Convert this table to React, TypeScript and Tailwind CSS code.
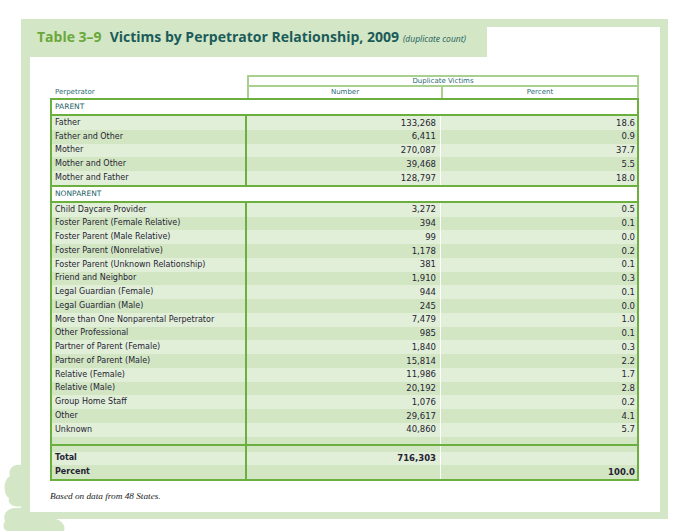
import React from 'react';

type Row = [string, string, string];

const parentRows: Row[] = [
  ['Father', '133,268', '18.6'],
  ['Father and Other', '6,411', '0.9'],
  ['Mother', '270,087', '37.7'],
  ['Mother and Other', '39,468', '5.5'],
  ['Mother and Father', '128,797', '18.0'],
];

const nonparentRows: Row[] = [
  ['Child Daycare Provider', '3,272', '0.5'],
  ['Foster Parent (Female Relative)', '394', '0.1'],
  ['Foster Parent (Male Relative)', '99', '0.0'],
  ['Foster Parent (Nonrelative)', '1,178', '0.2'],
  ['Foster Parent (Unknown Relationship)', '381', '0.1'],
  ['Friend and Neighbor', '1,910', '0.3'],
  ['Legal Guardian (Female)', '944', '0.1'],
  ['Legal Guardian (Male)', '245', '0.0'],
  ['More than One Nonparental Perpetrator', '7,479', '1.0'],
  ['Other Professional', '985', '0.1'],
  ['Partner of Parent (Female)', '1,840', '0.3'],
  ['Partner of Parent (Male)', '15,814', '2.2'],
  ['Relative (Female)', '11,986', '1.7'],
  ['Relative (Male)', '20,192', '2.8'],
  ['Group Home Staff', '1,076', '0.2'],
  ['Other', '29,617', '4.1'],
  ['Unknown', '40,860', '5.7'],
];

const DataRow = ({ label = '', num = '', pct = '', dark = false, bold = false, h = 'h-[13.75px]' }: {
  label?: string; num?: string; pct?: string; dark?: boolean; bold?: boolean; h?: string;
}) => (
  <div className={`flex ${h} items-center ${dark ? 'bg-[#d2e6c4]' : 'bg-[#e1eed8]'} ${bold ? 'font-bold' : ''}`}>
    <div className="w-[195px] h-full flex items-center pl-[3px] border-r-2 border-[#6bb03f] text-[8px] whitespace-nowrap">{label}</div>
    <div className="w-[194px] h-full flex items-center justify-end pr-[4px] border-r border-white text-[8.5px]">{num}</div>
    <div className="flex-1 h-full flex items-center justify-end pr-[2px] text-[8.5px]">{pct}</div>
  </div>
);

const SectionHead = ({ text }: { text: string }) => (
  <div className="h-[14px] bg-white flex items-center pl-[3px] text-[7.5px] text-[#1e5f66]">{text}</div>
);

export default function App() {
  return (
    <div className="relative w-[674px] h-[531px] bg-white overflow-hidden pt-[19px] pl-[21px]">
      {/* scalloped decoration on the lower left */}
      <svg className="absolute left-0 top-[455px]" width="80" height="76" viewBox="0 455 80 76">
        <path
          fill="#d3e6c5"
          d="M22,465 C12,463 8,470 10,476 C3,480 3,494 9,498 C7,504 14,508 22,506 Z M22,508 C8,506 2,514 5,521 C2,526 4,531 8,531 L64,531 C66,526 62,521 56,519 L22,519 Z"
        />
      </svg>
      <div className="relative w-[647px] h-[500px] bg-[#d3e6c5] flex flex-col">
        <div className="flex h-[38px] shrink-0">
          <div className="w-[466px] pl-[16px] pt-[9px] leading-[16px] whitespace-nowrap" style={{ fontFamily: '"Open Sans", sans-serif' }}>
            <span className="text-[14px] font-bold text-[#6aa83a]">Table 3–9</span>
            <span className="text-[14px] font-bold text-[#1b5c5a] ml-[8px]">Victims by Perpetrator Relationship, 2009</span>
            <span className="text-[8.5px] italic text-[#1b5c5a] ml-[4px]">(duplicate count)</span>
          </div>
          <div className="flex-1 bg-white mt-[8px] mr-[8px]" />
        </div>
        <div className="flex-1 bg-white ml-[9px] mr-[8px] mb-[7px] pt-[18px] pl-[20px]" style={{ fontFamily: '"DejaVu Sans", Verdana, sans-serif' }}>
          <div className="w-[589px]">
            <div className="flex">
              <div className="w-[197px] flex items-end pl-[5px] pb-[1px] text-[7px] text-[#2b6b73]">Perpetrator</div>
              <div className="w-[392px] border-2 border-b-0 border-[#a9d08e] text-[7px] text-[#2b6b73]">
                <div className="h-[10px] flex items-center justify-center border-b-2 border-[#a9d08e]">Duplicate Victims</div>
                <div className="h-[11px] flex">
                  <div className="w-[194px] border-r-2 border-[#a9d08e] flex items-center justify-center">Number</div>
                  <div className="flex-1 flex items-center justify-center">Percent</div>
                </div>
              </div>
            </div>
            <div className="border-2 border-[#6bb03f] text-[#262433]">
              <SectionHead text="PARENT" />
              <div className="border-t-2 border-[#6bb03f]">
                {parentRows.map((r, i) => (
                  <DataRow key={r[0]} label={r[0]} num={r[1]} pct={r[2]} dark={i % 2 === 1} />
                ))}
              </div>
              <div className="border-t-2 border-[#6bb03f]">
                <SectionHead text="NONPARENT" />
              </div>
              <div className="border-t-2 border-[#6bb03f]">
                {nonparentRows.map((r, i) => (
                  <DataRow key={r[0]} label={r[0]} num={r[1]} pct={r[2]} dark={i % 2 === 1} />
                ))}
                <DataRow dark h="h-[7px]" />
              </div>
              <div className="border-t-2 border-[#6bb03f]">
                <DataRow dark h="h-[6px]" />
                <DataRow label="Total" num="716,303" bold />
                <DataRow label="Percent" pct="100.0" bold dark />
              </div>
            </div>
            <p className="mt-[9px] text-[9.25px] italic text-[#222]" style={{ fontFamily: '"Liberation Serif", serif' }}>
              Based on data from 48 States.
            </p>
          </div>
        </div>
      </div>
    </div>
  );
}
